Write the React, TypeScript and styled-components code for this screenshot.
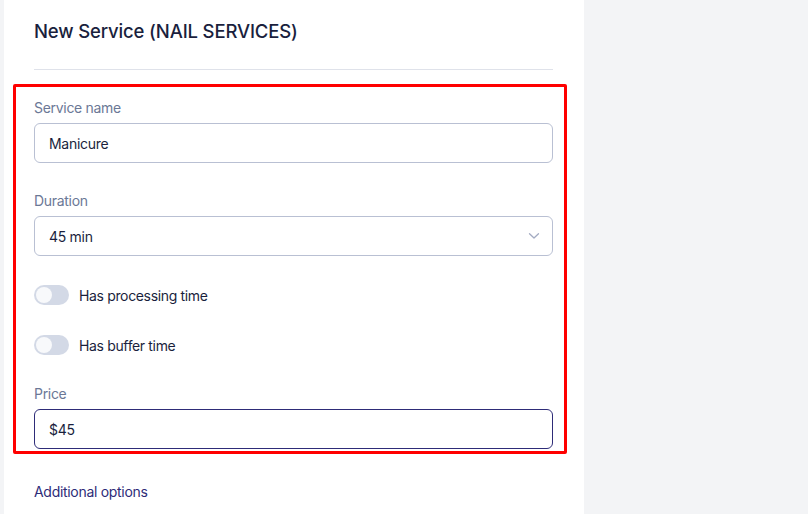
import React from 'react';
import styled, { createGlobalStyle } from 'styled-components';

const GlobalStyle = createGlobalStyle`
  html, body {
    margin: 0;
    padding: 0;
    background: #f3f4f6;
    font-family: Inter, "Noto Sans", "Liberation Sans", sans-serif;
  }
  * {
    box-sizing: border-box;
  }
`;

const Page = styled.div`
  display: flex;
  min-height: 514px;
  padding-left: 4px;
`;

const Panel = styled.div`
  width: 580px;
  min-height: 514px;
  background: #ffffff;
  padding: 19px 31px 0 30px;
`;

const Title = styled.h2`
  margin: 0;
  font-size: 18.5px;
  line-height: 24px;
  font-weight: 500;
  letter-spacing: -0.15px;
  color: #1a1f3d;
`;

const Divider = styled.hr`
  border: none;
  border-top: 1px solid #dfe2ea;
  margin: 26px 0 14px;
`;

const Highlight = styled.div`
  margin-left: -21px;
  margin-right: -14px;
  padding: 11px 11px 2px 18px;
  border: 3.5px solid #ff0000;
  border-radius: 2px;
  display: flex;
  flex-direction: column;
`;

const Field = styled.div<{ $gap?: number }>`
  display: flex;
  flex-direction: column;
  gap: 5px;
  margin-bottom: ${(p) => p.$gap ?? 0}px;
`;

const Label = styled.label`
  font-size: 14px;
  line-height: 20px;
  letter-spacing: -0.3px;
  color: #6b7896;
`;

const Box = styled.div<{ $focused?: boolean }>`
  height: 40px;
  border: 1px solid ${(p) => (p.$focused ? '#2e2c78' : '#b9c0d3')};
  border-radius: 6px;
  display: flex;
  align-items: center;
  padding: 0 14px;
  font-size: 14px;
  letter-spacing: -0.3px;
  color: #1a1f3d;
`;

const Chevron = styled.svg`
  margin-left: auto;
  margin-right: -2px;
`;

const ToggleRow = styled.div<{ $gap?: number }>`
  display: flex;
  align-items: center;
  gap: 10px;
  height: 20px;
  margin-bottom: ${(p) => p.$gap ?? 0}px;
`;

const Track = styled.span`
  position: relative;
  width: 35px;
  height: 20px;
  border-radius: 10px;
  background: #d3d9e6;
  flex-shrink: 0;
`;

const Knob = styled.span`
  position: absolute;
  left: 2px;
  top: 2px;
  width: 16px;
  height: 16px;
  border-radius: 50%;
  background: #f8f9fb;
`;

const ToggleText = styled.span`
  font-size: 14px;
  letter-spacing: -0.35px;
  color: #1a1f3d;
`;

const SectionLink = styled.div`
  margin-top: 28px;
  font-size: 14px;
  line-height: 20px;
  letter-spacing: -0.3px;
  color: #2e2c78;
`;

const Toggle = ({ label, gap }: { label: string; gap?: number }) => (
  <ToggleRow $gap={gap}>
    <Track>
      <Knob />
    </Track>
    <ToggleText>{label}</ToggleText>
  </ToggleRow>
);

const App: React.FC = () => {
  return (
    <>
      <GlobalStyle />
      <Page>
        <Panel>
          <Title>New Service (NAIL SERVICES)</Title>
          <Divider />
          <Highlight>
            <Field $gap={28}>
              <Label>Service name</Label>
              <Box>Manicure</Box>
            </Field>
            <Field $gap={29}>
              <Label>Duration</Label>
              <Box>
                45 min
                <Chevron width="12" height="8" viewBox="0 0 12 8" fill="none">
                  <path d="M1.5 1.8L6 6L10.5 1.8" stroke="#a3abc2" strokeWidth="1.3" strokeLinecap="round" strokeLinejoin="round" />
                </Chevron>
              </Box>
            </Field>
            <Toggle label="Has processing time" gap={30} />
            <Toggle label="Has buffer time" gap={29} />
            <Field>
              <Label>Price</Label>
              <Box $focused>$45</Box>
            </Field>
          </Highlight>
          <SectionLink>Additional options</SectionLink>
        </Panel>
      </Page>
    </>
  );
};

export default App;
